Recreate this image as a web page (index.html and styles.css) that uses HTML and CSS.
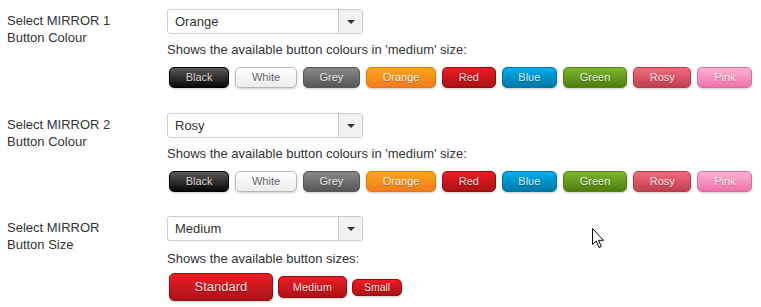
FILE: index.html
```html
<!DOCTYPE html>
<html>
<head>
<meta charset="utf-8">
<link rel="stylesheet" href="styles.css">
</head>
<body>
<div class="page">
  <section class="row">
    <div class="label">Select MIRROR 1<br>Button Colour</div>
    <div class="field">
      <div class="select"><span class="value">Orange</span><span class="arrow"></span></div>
      <p class="hint">Shows the available button colours in 'medium' size:</p>
      <div class="buttons">
        <span class="btn black">Black</span>
        <span class="btn white">White</span>
        <span class="btn grey">Grey</span>
        <span class="btn orange">Orange</span>
        <span class="btn red">Red</span>
        <span class="btn blue">Blue</span>
        <span class="btn green">Green</span>
        <span class="btn rosy">Rosy</span>
        <span class="btn pink">Pink</span>
      </div>
    </div>
  </section>
  <section class="row">
    <div class="label">Select MIRROR 2<br>Button Colour</div>
    <div class="field">
      <div class="select"><span class="value">Rosy</span><span class="arrow"></span></div>
      <p class="hint">Shows the available button colours in 'medium' size:</p>
      <div class="buttons">
        <span class="btn black">Black</span>
        <span class="btn white">White</span>
        <span class="btn grey">Grey</span>
        <span class="btn orange">Orange</span>
        <span class="btn red">Red</span>
        <span class="btn blue">Blue</span>
        <span class="btn green">Green</span>
        <span class="btn rosy">Rosy</span>
        <span class="btn pink">Pink</span>
      </div>
    </div>
  </section>
  <section class="row">
    <div class="label">Select MIRROR<br>Button Size</div>
    <div class="field">
      <div class="select"><span class="value">Medium</span><span class="arrow"></span></div>
      <p class="hint hint-size">Shows the available button sizes:</p>
      <div class="buttons sizes">
        <span class="btn red standard">Standard</span>
        <span class="btn red medium">Medium</span>
        <span class="btn red small">Small</span>
      </div>
    </div>
  </section>
</div>
<svg class="cursor" width="14" height="21" viewBox="0 0 14 21">
  <path d="M0.5 0.5 L0.5 16.5 L4.2 13 L7 19.5 L9.3 18.5 L6.6 12.3 L11.5 12.3 Z" fill="#fff" stroke="#000" stroke-width="1" stroke-linejoin="miter"/>
</svg>
</body>
</html>
```
FILE: styles.css
```css
html, body {
  margin: 0;
  padding: 0;
  background: #fff;
}
body {
  font-family: "Liberation Sans", Arial, sans-serif;
  font-size: 13px;
  color: #333;
  width: 761px;
  height: 307px;
  overflow: hidden;
  position: relative;
}
.page {
  padding: 9px 0 0 7px;
}
.row {
  display: flex;
  margin-bottom: 25px;
}
.row:nth-child(2) {
  margin-bottom: 24px;
}
.row:last-child {
  margin-bottom: 0;
}
.label {
  width: 160px;
  flex: none;
  padding-top: 3px;
  line-height: 17px;
  color: #333;
}
.field {
  display: flex;
  flex-direction: column;
}
.select {
  box-sizing: border-box;
  width: 196px;
  height: 25px;
  border: 1px solid #ccc;
  border-radius: 3px;
  display: flex;
  background: #fff;
}
.value {
  flex: 1;
  padding-left: 7px;
  line-height: 23px;
  color: #333;
}
.arrow {
  width: 23px;
  border-left: 1px solid #ccc;
  background: #f2f2f2;
  border-radius: 0 2px 2px 0;
  display: flex;
  align-items: center;
  justify-content: center;
}
.arrow::after {
  content: "";
  width: 0;
  height: 0;
  border-left: 4px solid transparent;
  border-right: 4px solid transparent;
  border-top: 4px solid #333;
}
.hint {
  margin: 8px 0 0;
  line-height: 16px;
  color: #333;
}
.hint-size {
  margin-top: 10px;
}
.buttons {
  display: flex;
  gap: 6px;
  margin: 9px 0 0 2px;
}
.buttons.sizes {
  align-items: center;
  gap: 5px;
  margin-top: 6px;
}
.btn {
  box-sizing: border-box;
  height: 21px;
  line-height: 19px;
  padding: 0 15.7px;
  border: 1px solid;
  border-radius: 5px;
  font-family: "Liberation Sans", Arial, sans-serif;
  font-size: 11px;
  color: #fff;
  text-align: center;
  white-space: nowrap;
  text-shadow: 0 1px 1px rgba(0,0,0,0.3);
  box-shadow: 0 1px 2px rgba(0,0,0,0.2);
}
.black {
  color: #d7d7d7;
  border-color: #000;
  background: linear-gradient(#5a5a5a, #050505);
}
.white {
  color: #606060;
  border-color: #b7b7b7;
  text-shadow: 0 1px 0 #fff;
  background: linear-gradient(#fff, #ededed);
}
.grey {
  color: #e9e9e9;
  border-color: #555;
  background: linear-gradient(#888, #575757);
}
.orange {
  color: #fef4e9;
  border-color: #da7c0c;
  background: linear-gradient(#faa51a, #f47a20);
}
.red {
  color: #faddde;
  border-color: #980c10;
  background: linear-gradient(#ed1c24, #aa1317);
}
.blue {
  color: #d9eef7;
  border-color: #0076a3;
  background: linear-gradient(#00adee, #0078a5);
}
.green {
  color: #e8f0de;
  border-color: #538312;
  background: linear-gradient(#7db72f, #4e7d0e);
}
.rosy {
  color: #fae7e9;
  border-color: #b73948;
  background: linear-gradient(#f16c7c, #bf404f);
}
.pink {
  color: #feeef5;
  border-color: #d2729e;
  background: linear-gradient(#feb1d3, #f171ab);
}
.standard {
  height: 28px;
  line-height: 26px;
  font-size: 13px;
  padding: 0 24.5px;
}
.medium {
  height: 22px;
  line-height: 20px;
  padding: 0 14px;
}
.small {
  height: 17px;
  line-height: 15px;
  padding: 0 11px;
  font-size: 10.5px;
}
.cursor {
  position: absolute;
  left: 592px;
  top: 228px;
}
```
